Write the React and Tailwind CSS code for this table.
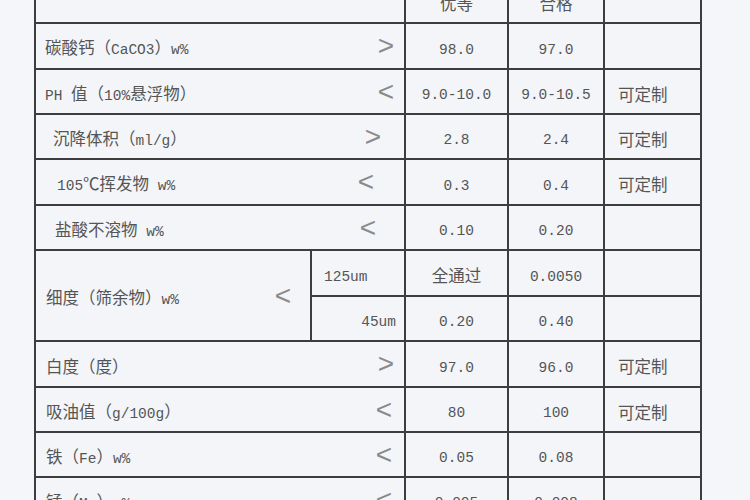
import React from 'react'

// Spec sheet table (partial screenshot): ASCII runs in mono, CJK runs in Noto.
function Txt(props) {
  var s = props.s || ''
  var parts = s.match(/[\x20-\x7e]+|[^\x20-\x7e]+/g) || []
  return (
    <span className="whitespace-nowrap">
      {parts.map(function (p, i) {
        var ascii = /^[\x20-\x7e]+$/.test(p)
        return ascii
          ? <span key={i} className="font-['Liberation_Mono',monospace] text-[14.5px]">{p}</span>
          : <span key={i} className="font-['Noto_Sans_CJK_SC',sans-serif] text-[16.5px]">{p}</span>
      })}
    </span>
  )
}

function Sym(props) {
  return (
    <span className="font-['Liberation_Sans',sans-serif] text-[28px] leading-none text-[#8a8a8a] -mt-[5px]">
      {props.c}
    </span>
  )
}

var rows = [
  { label: '碳酸钙（CaCO3）w%', pl: 'pl-[9px]', pr: 'pr-[10px]', sym: '>', a: '98.0', b: '97.0', note: '', h: 'h-[46px]' },
  { label: 'PH 值（10%悬浮物）', pl: 'pl-[9px]', pr: 'pr-[10px]', sym: '<', a: '9.0-10.0', b: '9.0-10.5', note: '可定制', h: 'h-[45px]' },
  { label: '沉降体积（ml/g）', pl: 'pl-[17px]', pr: 'pr-[23px]', sym: '>', a: '2.8', b: '2.4', note: '可定制', h: 'h-[45px]' },
  { label: '105℃挥发物 w%', pl: 'pl-[21px]', pr: 'pr-[30px]', sym: '<', a: '0.3', b: '0.4', note: '可定制', h: 'h-[46px]' },
  { label: '盐酸不溶物 w%', pl: 'pl-[19px]', pr: 'pr-[28px]', sym: '<', a: '0.10', b: '0.20', note: '', h: 'h-[45px]' }
]

var rows2 = [
  { label: '白度（度）', pr: 'pr-[10px]', sym: '>', a: '97.0', b: '96.0', note: '可定制', h: 'h-[46px]' },
  { label: '吸油值（g/100g）', pr: 'pr-[12px]', sym: '<', a: '80', b: '100', note: '可定制', h: 'h-[45px]' },
  { label: '铁（Fe）w%', pr: 'pr-[12px]', sym: '<', a: '0.05', b: '0.08', note: '', h: 'h-[45px]' },
  { label: '锰（Mn）w%', pr: 'pr-[12px]', sym: '<', a: '0.005', b: '0.008', note: '', h: 'h-[45px]' }
]

var cell = 'border-2 border-[#3d3d3d] p-0 pt-[5px] align-middle'

function ValueCells(props) {
  var r = props.r
  return (
    <>
      <td className={cell + ' text-center'}><Txt s={r.a} /></td>
      <td className={cell + ' text-center'}><Txt s={r.b} /></td>
      <td className={cell + ' pl-[13px] text-left'}>{r.note ? <Txt s={r.note} /> : null}</td>
    </>
  )
}

export default function App() {
  return (
    <div className="w-[750px] h-[500px] overflow-hidden bg-[#f5f6fa] text-[#555]">
      <table className="table-fixed border-collapse ml-[34px] -mt-[23px] w-[666px] bg-[#f3f5f9]">
        <colgroup>
          <col className="w-[276px]" />
          <col className="w-[94px]" />
          <col className="w-[103px]" />
          <col className="w-[96px]" />
          <col className="w-[97px]" />
        </colgroup>
        <tbody>
          <tr className="h-[45px]">
            <td colSpan={2} className={cell}></td>
            <td className={cell + ' text-center'}><Txt s="优等" /></td>
            <td className={cell + ' text-center'}><Txt s="合格" /></td>
            <td className={cell}></td>
          </tr>
          {rows.map(function (r) {
            return (
              <tr key={r.label} className={r.h}>
                <td colSpan={2} className={cell}>
                  <div className={'flex items-center justify-between ' + r.pl + ' ' + r.pr}>
                    <Txt s={r.label} />
                    <Sym c={r.sym} />
                  </div>
                </td>
                <ValueCells r={r} />
              </tr>
            )
          })}
          <tr className="h-[46px]">
            <td rowSpan={2} className={cell}>
              <div className="flex items-center justify-between pl-[10px] pr-[19px]">
                <Txt s="细度（筛余物）w%" />
                <Sym c="<" />
              </div>
            </td>
            <td className={cell + ' pl-[12px] text-left'}><Txt s="125um" /></td>
            <ValueCells r={{ a: '全通过', b: '0.0050', note: '' }} />
          </tr>
          <tr className="h-[45px]">
            <td className={cell + ' pr-[8px] text-right'}><Txt s="45um" /></td>
            <ValueCells r={{ a: '0.20', b: '0.40', note: '' }} />
          </tr>
          {rows2.map(function (r) {
            return (
              <tr key={r.label} className={r.h}>
                <td colSpan={2} className={cell}>
                  <div className={'flex items-center justify-between pl-[10px] ' + r.pr}>
                    <Txt s={r.label} />
                    <Sym c={r.sym} />
                  </div>
                </td>
                <ValueCells r={r} />
              </tr>
            )
          })}
        </tbody>
      </table>
    </div>
  )
}
